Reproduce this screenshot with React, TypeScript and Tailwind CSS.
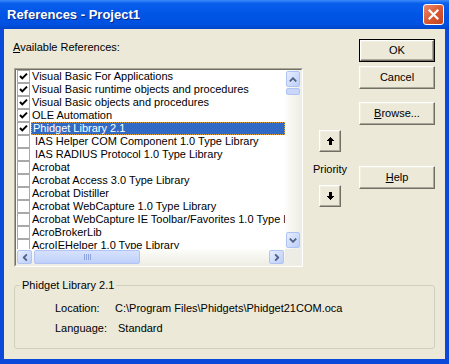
import React from "react"

type Ref = { name: string; checked?: boolean; selected?: boolean }

const refs: Ref[] = [
  { name: "Visual Basic For Applications", checked: true },
  { name: "Visual Basic runtime objects and procedures", checked: true },
  { name: "Visual Basic objects and procedures", checked: true },
  { name: "OLE Automation", checked: true },
  { name: "Phidget Library 2.1", checked: true, selected: true },
  { name: " IAS Helper COM Component 1.0 Type Library" },
  { name: " IAS RADIUS Protocol 1.0 Type Library" },
  { name: "Acrobat" },
  { name: "Acrobat Access 3.0 Type Library" },
  { name: "Acrobat Distiller" },
  { name: "Acrobat WebCapture 1.0 Type Library" },
  { name: "Acrobat WebCapture IE Toolbar/Favorites 1.0 Type Library" },
  { name: "AcroBrokerLib" },
  { name: "AcroIEHelper 1.0 Type Library" },
]

// classic raised 3D edge used by the VB dialog buttons
const raised =
  "border border-t-white border-l-white border-b-[#716F64] border-r-[#716F64] shadow-[inset_-1px_-1px_0_#ACA899,inset_1px_1px_0_#F1EFE2] bg-[#ECE9D8]"

function Chevron({ className }: { className?: string }) {
  return (
    <svg width="8" height="5" viewBox="0 0 8 5" className={className}>
      <path d="M0.8 4.4 L4 1.2 L7.2 4.4" fill="none" stroke="#4D6185" strokeWidth="1.8" />
    </svg>
  )
}

function ScrollBtn({ className, arrow }: { className: string; arrow: string }) {
  return (
    <div
      className={`flex items-center justify-center rounded-[2px] border border-[#B0C4F4] bg-gradient-to-br from-[#E6EDFE] to-[#BCCEF8] ${className}`}
    >
      <Chevron className={arrow} />
    </div>
  )
}

function CheckBox({ checked }: { checked?: boolean }) {
  return (
    <div className="w-[13px] h-[13px] shrink-0 border border-[#A9A9A9] bg-white flex items-center justify-center">
      {checked && (
        <svg width="11" height="11" viewBox="0 0 11 11">
          <path d="M2 5 L4.3 7.4 L9 2.6" fill="none" stroke="#000" strokeWidth="2" />
        </svg>
      )}
    </div>
  )
}

function PushButton({ children, isDefault }: { children: React.ReactNode; isDefault?: boolean }) {
  if (isDefault) {
    return (
      <div className="w-[76px] h-[23px] border border-black">
        <div className={`w-full h-full flex items-center justify-center ${raised}`}>{children}</div>
      </div>
    )
  }
  return <div className={`w-[76px] h-[23px] flex items-center justify-center ${raised}`}>{children}</div>
}

function ArrowButton({ down }: { down?: boolean }) {
  return (
    <div className={`w-[22px] h-[22px] flex items-center justify-center ${raised}`}>
      <svg width="7" height="8" viewBox="0 0 7 8" className={down ? "rotate-180" : ""} shapeRendering="crispEdges">
        <path d="M3.5 0 L7 4 L5 4 L5 8 L2 8 L2 4 L0 4 Z" fill="#000" />
      </svg>
    </div>
  )
}

function ListBox() {
  return (
    <div className="w-[289px] h-[199px] border border-t-[#ACA899] border-l-[#ACA899] border-b-white border-r-white">
      <div className="w-full h-full border border-t-[#716F64] border-l-[#716F64] border-b-[#F1EFE2] border-r-[#F1EFE2] bg-white flex flex-col">
        <div className="flex h-[179px]">
          {/* rows */}
          <div className="w-[269px] overflow-hidden flex flex-col">
            {refs.map((r) => (
              <div key={r.name} className="h-[13px] shrink-0 flex items-center pl-[1px]">
                <CheckBox checked={r.checked} />
                <div
                  className={`ml-[1px] flex-1 min-w-0 h-[13px] flex items-center whitespace-pre pl-[1px] ${
                    r.selected ? "bg-[#316AC5] text-white border border-dotted border-[#E3A23B] pl-0" : ""
                  }`}
                >
                  {r.name}
                </div>
              </div>
            ))}
          </div>
          {/* vertical scrollbar */}
          <div className="w-[16px] flex flex-col items-center bg-gradient-to-r from-[#FDFDFA] to-[#EEEDE5] py-[1px]">
            <ScrollBtn className="w-[14px] h-[16px]" arrow="" />
            <div className="w-[14px] h-[7px] mt-[1px] rounded-[2px] border border-[#B0C4F4] bg-[#C9D7FB]" />
            <div className="flex-1" />
            <ScrollBtn className="w-[14px] h-[16px]" arrow="rotate-180" />
          </div>
        </div>
        {/* horizontal scrollbar */}
        <div className="flex h-[16px]">
          <div className="w-[269px] flex items-center bg-gradient-to-b from-[#FDFDFA] to-[#EEEDE5] px-[1px]">
            <ScrollBtn className="w-[15px] h-[14px]" arrow="-rotate-90" />
            <div className="ml-[2px] w-[106px] h-[14px] rounded-[2px] border border-[#B0C4F4] bg-gradient-to-b from-[#D6E1FD] to-[#BFD0F9] flex items-center justify-center gap-[1px]">
              <span className="w-[1px] h-[6px] bg-[#8CA3DD]" />
              <span className="w-[1px] h-[6px] bg-[#8CA3DD]" />
              <span className="w-[1px] h-[6px] bg-[#8CA3DD]" />
              <span className="w-[1px] h-[6px] bg-[#8CA3DD]" />
            </div>
            <div className="flex-1" />
            <ScrollBtn className="w-[15px] h-[14px]" arrow="rotate-90" />
          </div>
          <div className="flex-1 bg-[#EEEDE5]" />
        </div>
      </div>
    </div>
  )
}

export default function App() {
  return (
    <div className="w-[449px] h-[364px] bg-[#0A49D9] flex flex-col font-['Liberation_Sans',Arial,sans-serif] text-[11px] leading-[13px] text-black select-none">
      {/* Title bar */}
      <div className="h-[29px] shrink-0 flex items-center pl-[7px] pr-[5px] bg-[linear-gradient(to_bottom,#3A8CFA_0%,#0A5EEC_12%,#0055E5_50%,#0050E0_85%,#0244C8_100%)]">
        <span className="flex-1 text-white font-bold text-[13px] [text-shadow:1px_1px_0_#0A2A8A]">
          References - Project1
        </span>
        <div className="w-[21px] h-[21px] rounded-[3px] border border-white bg-gradient-to-br from-[#E9896A] via-[#D95A33] to-[#C2421C] flex items-center justify-center">
          <svg width="11" height="11" viewBox="0 0 11 11">
            <path d="M1.5 1.5 L9.5 9.5 M9.5 1.5 L1.5 9.5" stroke="#fff" strokeWidth="2.2" strokeLinecap="square" />
          </svg>
        </div>
      </div>

      {/* Client area */}
      <div className="flex-1 mx-[4px] mb-[5px] bg-[#ECE9D8] flex flex-col px-[10px]">
        <div className="flex items-start">
          <div className="flex flex-col">
            <div className="mt-[12px] h-[13px] -ml-[1px]">
              <u>A</u>vailable References:
            </div>
            <div className="mt-[14px]">
              <ListBox />
            </div>
          </div>

          <div className="ml-[8px] w-[38px] mt-[101px] flex flex-col items-center">
            <ArrowButton />
            <div className="mt-[11px] h-[13px]">Priority</div>
            <div className="mt-[9px]">
              <ArrowButton down />
            </div>
          </div>

          <div className="ml-auto mt-[10px] flex flex-col">
            <PushButton isDefault>OK</PushButton>
            <div className="mt-[4px]">
              <PushButton>Cancel</PushButton>
            </div>
            <div className="mt-[13px]">
              <PushButton>
                <span>
                  <u>B</u>rowse...
                </span>
              </PushButton>
            </div>
            <div className="mt-[41px]">
              <PushButton>
                <span>
                  <u>H</u>elp
                </span>
              </PushButton>
            </div>
          </div>
        </div>

        <fieldset className="mt-[12px] h-[70px] border border-[#D0D0BF] rounded-[3px] px-0">
          <legend className="ml-[5px] px-[2px] h-[13px]">Phidget Library 2.1</legend>
          <div className="mt-[10px] ml-[40px] grid grid-cols-[60px_auto] gap-y-[7px]">
            <span>Location:</span>
            <span>C:\Program Files\Phidgets\Phidget21COM.oca</span>
            <span>Language:</span>
            <span className="ml-[3px]">Standard</span>
          </div>
        </fieldset>
      </div>
    </div>
  )
}
